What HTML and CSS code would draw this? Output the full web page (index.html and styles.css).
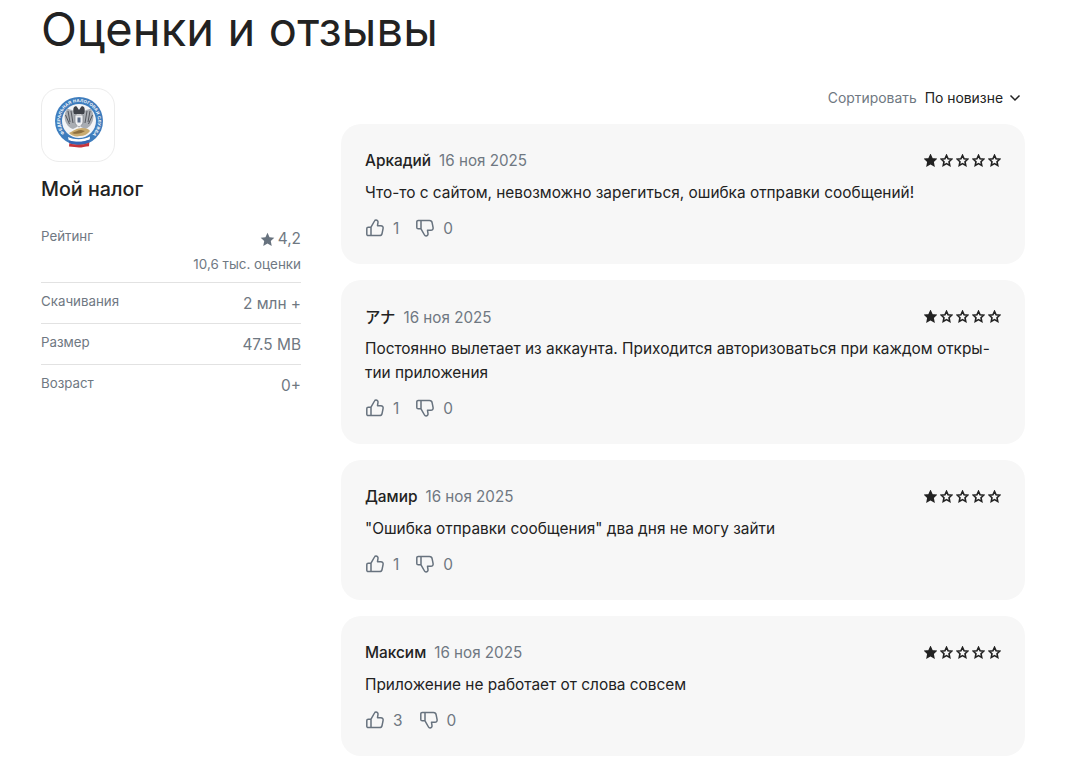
FILE: index.html
```html
<!DOCTYPE html>
<html lang="ru">
<head>
<meta charset="utf-8">
<title>Оценки и отзывы</title>
<link rel="stylesheet" href="styles.css">
</head>
<body>
<svg class="defs" width="0" height="0" aria-hidden="true">
  <defs>
    <path id="star" d="M6 1.300l1.450 3.100 3.350.42-2.470 2.320.65 3.360L6 8.860 3.020 10.500l.65-3.360L1.200 4.820l3.350-.42z"/>
    <path id="up" d="M6 9.200H3.200A1.400 1.400 0 0 0 1.800 10.600v5.600a1.400 1.400 0 0 0 1.400 1.400H6m0-8.400v8.400m0-8.400l3.500-6.200c.3-.6 1-.9 1.500-.9 1.300 0 2.200 1.100 2 2.300l-.5 3.300h3.400c1.500 0 2.500 1.300 2.200 2.700l-1 5c-.2 1.300-1.300 2.200-2.600 2.200H6"/>
  </defs>
</svg>
<main class="page">
  <h1 class="title">Оценки и отзывы</h1>
  <div class="columns">
    <aside class="side">
      <div class="logo">
        <svg viewBox="0 0 72 72" width="72" height="72">
          <circle cx="37" cy="32" r="24" fill="#3f7dbd"/>
          <circle cx="37" cy="32" r="17" fill="#f3f4f6"/>
          <path id="arc" d="M23.140 45a19 19 0 1 1 27.720 0" fill="none"/>
          <text class="logo-text"><textPath href="#arc" startOffset="1">ФЕДЕРАЛЬНАЯ НАЛОГОВАЯ СЛУЖБА</textPath></text>
          <g class="emblem">
            <path d="M35 26c-2-4-6-6-10-6-2 3-3 7-2 11 1 4 4 8 8 9l4-2z" fill="#a9adb3"/>
            <path d="M39 26c2-4 6-6 10-6 2 3 3 7 2 11-1 4-4 8-8 9l-4-2z" fill="#a9adb3"/>
            <path d="M26 22l2 11M29 22l2 12M23.500 26l4 9M48 22l-2 11M45 22l-2 12M50.500 26l-4 9" stroke="#55585f" stroke-width="1" fill="none"/>
            <path d="M32 25c-1-3-1-5 0-7l2-1 1 1 2 3 2-3 1-1 2 1c1 2 1 4 0 7z" fill="#3f4249"/>
            <path d="M33 26h8v7c0 2-2 4-4 5-2-1-4-3-4-5z" fill="#eef0f3" stroke="#6b6f76" stroke-width=".6"/>
            <path d="M35.500 28.500h3v5h-3z" fill="#5a6c88"/>
            <path d="M27 44c4-2 8-5 13-5 4 0 7 1 8 3-2 3-6 5-10 5-4 1-8 0-11-3z" fill="#c9ab70"/>
            <path d="M30 44c3-1 6-3 9-3l4 1c-3 2-8 4-13 2z" fill="#8d6f3f"/>
          </g>
          <path d="M26 48c7 3 15 3 22-.5l-.3 3c-7 3-14 3-21 .7z" fill="#fff"/>
          <path d="M26.700 51.200c7 2.300 14 2.300 21-.7l-.4 3c-7 2.800-13 2.800-20 .7z" fill="#3566b5"/>
          <path d="M27.300 54.200c7 2.100 13 2.100 20-.7l-.3 3.700c-4 .3-7 1.300-10 1.300-3 0-6-1-10-1z" fill="#c5343c"/>
        </svg>
      </div>
      <h2 class="app-name">Мой налог</h2>
      <dl class="facts">
        <div class="fact fact-rating">
          <dt>Рейтинг</dt>
          <dd>
            <span class="score"><svg class="score-star" viewBox="0 0 12 12" width="17" height="17"><use href="#star"/></svg>4,2</span>
            <span class="votes">10,6 тыс. оценки</span>
          </dd>
        </div>
        <div class="fact"><dt>Скачивания</dt><dd>2 млн +</dd></div>
        <div class="fact"><dt>Размер</dt><dd>47.5 MB</dd></div>
        <div class="fact"><dt>Возраст</dt><dd>0+</dd></div>
      </dl>
    </aside>
    <section class="reviews">
      <div class="sort"><span class="sort-label">Сортировать</span><span class="sort-value">По новизне</span>
        <svg class="chev" viewBox="0 0 12 8" width="12" height="8"><path d="M1.500 1.500L6 6l4.500-4.500"/></svg>
      </div>

      <article class="card">
        <header class="card-head">
          <div class="who"><span class="author">Аркадий</span><time class="date">16 ноя 2025</time></div>
          <div class="stars"><svg viewBox="0 0 12 12" class="on"><use href="#star"/></svg><svg viewBox="0 0 12 12"><use href="#star"/></svg><svg viewBox="0 0 12 12"><use href="#star"/></svg><svg viewBox="0 0 12 12"><use href="#star"/></svg><svg viewBox="0 0 12 12"><use href="#star"/></svg></div>
        </header>
        <p class="text">Что-то с сайтом, невозможно зарегиться, ошибка отправки сообщений!</p>
        <footer class="votes-row">
          <span class="vote"><svg viewBox="0 0 20 20" class="thumb"><use href="#up"/></svg>1</span>
          <span class="vote"><svg viewBox="0 0 20 20" class="thumb down"><use href="#up"/></svg>0</span>
        </footer>
      </article>

      <article class="card">
        <header class="card-head">
          <div class="who"><span class="author">アナ</span><time class="date">16 ноя 2025</time></div>
          <div class="stars"><svg viewBox="0 0 12 12" class="on"><use href="#star"/></svg><svg viewBox="0 0 12 12"><use href="#star"/></svg><svg viewBox="0 0 12 12"><use href="#star"/></svg><svg viewBox="0 0 12 12"><use href="#star"/></svg><svg viewBox="0 0 12 12"><use href="#star"/></svg></div>
        </header>
        <p class="text">Постоянно вылетает из аккаунта. Приходится авторизоваться при каждом откры-<br>тии приложения</p>
        <footer class="votes-row">
          <span class="vote"><svg viewBox="0 0 20 20" class="thumb"><use href="#up"/></svg>1</span>
          <span class="vote"><svg viewBox="0 0 20 20" class="thumb down"><use href="#up"/></svg>0</span>
        </footer>
      </article>

      <article class="card">
        <header class="card-head">
          <div class="who"><span class="author">Дамир</span><time class="date">16 ноя 2025</time></div>
          <div class="stars"><svg viewBox="0 0 12 12" class="on"><use href="#star"/></svg><svg viewBox="0 0 12 12"><use href="#star"/></svg><svg viewBox="0 0 12 12"><use href="#star"/></svg><svg viewBox="0 0 12 12"><use href="#star"/></svg><svg viewBox="0 0 12 12"><use href="#star"/></svg></div>
        </header>
        <p class="text">"Ошибка отправки сообщения" два дня не могу зайти</p>
        <footer class="votes-row">
          <span class="vote"><svg viewBox="0 0 20 20" class="thumb"><use href="#up"/></svg>1</span>
          <span class="vote"><svg viewBox="0 0 20 20" class="thumb down"><use href="#up"/></svg>0</span>
        </footer>
      </article>

      <article class="card">
        <header class="card-head">
          <div class="who"><span class="author">Максим</span><time class="date">16 ноя 2025</time></div>
          <div class="stars"><svg viewBox="0 0 12 12" class="on"><use href="#star"/></svg><svg viewBox="0 0 12 12"><use href="#star"/></svg><svg viewBox="0 0 12 12"><use href="#star"/></svg><svg viewBox="0 0 12 12"><use href="#star"/></svg><svg viewBox="0 0 12 12"><use href="#star"/></svg></div>
        </header>
        <p class="text">Приложение не работает от слова совсем</p>
        <footer class="votes-row">
          <span class="vote"><svg viewBox="0 0 20 20" class="thumb"><use href="#up"/></svg>3</span>
          <span class="vote"><svg viewBox="0 0 20 20" class="thumb down"><use href="#up"/></svg>0</span>
        </footer>
      </article>
    </section>
  </div>
</main>
</body>
</html>
```
FILE: styles.css
```css
* { box-sizing: border-box; }
html, body { margin: 0; padding: 0; background: #fff; }
body {
  font-family: Inter, "Noto Sans CJK JP", sans-serif;
  color: #222;
  overflow: hidden;
}
.defs { position: absolute; }
.page { width: 1067px; padding: 0 42px 0 41px; }
.title {
  margin: 0;
  height: 88px;
  padding-top: 1px;
  font-size: 47px;
  letter-spacing: .13px;
  line-height: 56px;
  font-weight: 430;
  color: #222;
}
.columns { display: flex; gap: 40px; align-items: flex-start; }
.side { width: 260px; flex: none; }
.logo {
  width: 74px;
  height: 74px;
  border: 1px solid #ececec;
  border-radius: 18px;
  overflow: hidden;
  background: #fff;
}
.logo svg { display: block; }
.logo-text { font-size: 4.300px; font-weight: 700; fill: #fff; font-family: "Liberation Sans", sans-serif; letter-spacing: .2px; }
.emblem { filter: blur(.25px); }
.app-name {
  margin: 15px 0 0;
  font-size: 19.700px;
  line-height: 24px;
  font-weight: 450;
  color: #222;
}
.facts { margin: 18px 0 0; }
.fact {
  display: flex;
  justify-content: space-between;
  border-top: 1px solid #e2e2e2;
  height: 41px;
  padding-top: 9px;
}
.fact-rating { border-top: 0; height: 63px; padding-top: 8px; }
.fact dt { font-size: 13.300px; line-height: 18px; color: #6f7882; }
.fact dd { margin: 2px 0 0; font-size: 15.400px; line-height: 20px; color: #6f7882; text-align: right; }
.score { display: flex; align-items: center; justify-content: flex-end; gap: 2px; }
.score-star { fill: #67727e; }
.votes { display: block; margin-top: 6px; font-size: 13.400px; line-height: 18px; }
.reviews { flex: 1; min-width: 0; display: flex; flex-direction: column; gap: 16px; }
.sort {
  display: flex;
  justify-content: flex-end;
  align-items: center;
  height: 20px;
  padding-right: 4px;
  font-size: 13.900px;
}
.sort-label { color: #6f7882; margin-right: 8px; }
.sort-value { color: #222; margin-right: 6px; }
.chev { fill: none; stroke: #222; stroke-width: 1.500; }
.card {
  background: #f7f7f7;
  border-radius: 20px;
  padding: 24px;
}
.card-head { display: flex; justify-content: space-between; align-items: center; height: 24px; }
.who { display: flex; align-items: baseline; gap: 8px; }
.author { font-size: 15.400px; font-weight: 450; color: #222; }
.date { font-size: 15.200px; color: #6f7882; }
.stars { display: flex; gap: 3px; }
.stars svg { width: 13px; height: 13px; fill: none; stroke: #222; stroke-width: 1.500; }
.stars svg.on { fill: #222; }
.text { margin: 9px 0 0; font-size: 15.400px; line-height: 24px; color: #222; }
.votes-row { display: flex; gap: 16px; margin-top: 11px; height: 24px; align-items: center; }
.vote { display: flex; align-items: center; gap: 8px; font-size: 15.400px; color: #6f7882; }
.thumb { width: 20px; height: 20px; fill: none; stroke: #67727e; stroke-width: 1.500; stroke-linejoin: round; stroke-linecap: round; }
.thumb.down { transform: scaleY(-1); }
```
